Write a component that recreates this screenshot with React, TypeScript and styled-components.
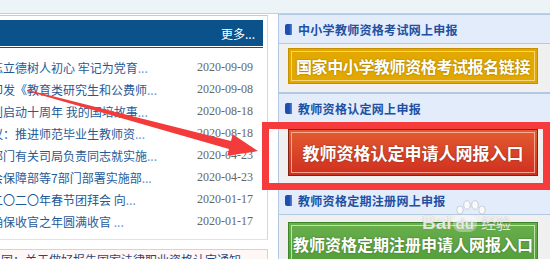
import styled, { createGlobalStyle } from 'styled-components'

const GlobalStyle = createGlobalStyle`
  html, body {
    margin: 0;
    padding: 0;
    background: #fff;
    overflow: hidden;
  }
  body {
    font-family: "Noto Sans CJK SC", "Liberation Sans", sans-serif;
  }
`

const news = [
  { title: '忘立德树人初心 牢记为党育', date: '2020-09-09', shift: 0 },
  { title: '印发《教育类研究生和公费师', date: '2020-09-08', shift: 0 },
  { title: '划启动十周年 我的国培故事', date: '2020-08-18', shift: 0 },
  { title: '议：推进师范毕业生教师资', date: '2020-08-18', shift: 0 },
  { title: '部门有关司局负责同志就实施', date: '2020-04-23', shift: 0 },
  { title: '会保障部等7部门部署实施部', date: '2020-04-23', shift: 0 },
  { title: '二〇二〇年春节团拜会 向', date: '2020-01-17', shift: 0 },
  { title: '确保收官之年圆满收官 ', date: '2020-01-17', shift: 0 },
]

export default function App() {
  return (
    <Page>
      <GlobalStyle />
      <TopStrip />
      <Main>
        <LeftCol>
          <NewsPanel>
            <NewsHeader>
              <More>更多...</More>
            </NewsHeader>
            <NewsList>
              {news.map(n => (
                <NewsRow key={n.title}>
                  <Title $shift={n.shift}>
                    {n.title}
                    <Dots>...</Dots>
                  </Title>
                  <DateText>{n.date}</DateText>
                </NewsRow>
              ))}
            </NewsList>
          </NewsPanel>
          <NoticeBox>国：关于做好报告国家法律职业资格认定通知</NoticeBox>
        </LeftCol>

        <RightCol>
          <Section>
            <SectionHead>
              <Mark />
              中小学教师资格考试网上申报
            </SectionHead>
            <SectionBody $top={4} $bottom={8}>
              <LinkButton $tone='gold' $height={36}>
                国家中小学教师资格考试报名链接
              </LinkButton>
            </SectionBody>
          </Section>
          <Section>
            <SectionHead>
              <Mark />
              教师资格认定网上申报
            </SectionHead>
            <SectionBody $top={6} $bottom={8}>
              <LinkButton $tone='red' $height={47}>
                教师资格认定申请人网报入口
              </LinkButton>
            </SectionBody>
          </Section>
          <Section>
            <SectionHead>
              <Mark />
              教师资格定期注册网上申报
            </SectionHead>
            <SectionBody $top={7} $bottom={8}>
              <LinkButton $tone='green' $height={44}>
                教师资格定期注册申请人网报入口
              </LinkButton>
            </SectionBody>
          </Section>
        </RightCol>
      </Main>

      <Highlight />

      <ArrowSvg viewBox='0 0 550 259' width='550' height='259'>
        <polygon
          fill='#f33b3b'
          points='27.2,89.7 231,141.1 232.7,134.3 258,151.1 227.3,155.7 229,148.9 26.8,91.1'
        />
      </ArrowSvg>

      <Watermark>
        <Paw viewBox='0 0 34 22' width='34' height='22'>
          <ellipse cx='6' cy='10' rx='3.2' ry='4' />
          <ellipse cx='13' cy='5' rx='3.2' ry='4.2' />
          <ellipse cx='21' cy='5' rx='3.2' ry='4.2' />
          <ellipse cx='28' cy='10' rx='3.2' ry='4' />
        </Paw>
        <WmLatin>Bai</WmLatin>
        <WmDu>du</WmDu>
        <WmCjk>经验</WmCjk>
      </Watermark>
    </Page>
  )
}

const Page = styled.div`
  position: relative;
  width: 550px;
  height: 259px;
  overflow: hidden;
  background: #fff;
`

const TopStrip = styled.div`
  height: 13px;
  background: #edf4f7;
  border-bottom: 1px solid #d4cdc7;
`

const Main = styled.div`
  display: flex;
  align-items: flex-start;
  gap: 10px;
`

const LeftCol = styled.div`
  flex-shrink: 0;
  width: 288px;
  margin-left: -20px;
`

const NewsPanel = styled.div`
  margin-top: 1px;
  border-top: 1px solid #b7cfe6;
  border-right: 1px solid #cbd8e5;
  border-bottom: 1px solid #e3e3e3;
  padding: 4px 4px 7px 0;
`

const NewsHeader = styled.div`
  height: 26px;
  padding-bottom: 1px;
  border-bottom: 1px solid #0b528a;
  background: #0b528a;
  background-clip: content-box;
  display: flex;
  align-items: center;
  justify-content: flex-end;
`

const More = styled.span`
  color: #fff;
  font-size: 12px;
  padding-right: 8px;
`

const NewsList = styled.div`
  padding-top: 8px;
`

const NewsRow = styled.div`
  height: 22px;
  display: flex;
  align-items: center;
  justify-content: space-between;
  padding: 0 10px 0 11px;
`

const Title = styled.span<{ $shift: number }>`
  margin-left: ${p => p.$shift}px;
  font-size: 12px;
  color: #1f5a98;
  white-space: nowrap;
`

const Dots = styled.span`
  color: #6a98cf;
`

const DateText = styled.span`
  font-family: "Liberation Serif", serif;
  font-size: 12px;
  color: #666;
`

const NoticeBox = styled.div`
  margin-top: 9px;
  height: 30px;
  border: 1px solid #f0c6c6;
  background: #fff6f6;
  padding: 1px 0 0 20px;
  font-size: 12px;
  color: #1f4a80;
  white-space: nowrap;
`

const RightCol = styled.div`
  flex-shrink: 0;
  width: 280px;
`

const Section = styled.div`
  border: 1px solid #b3c9e2;
  border-right: none;
`

const SectionHead = styled.div`
  height: 28px;
  background: #e3ecfb;
  border-bottom: 1px solid #b3c9e2;
  display: flex;
  align-items: center;
  gap: 6px;
  padding-left: 6px;
  font-size: 12px;
  letter-spacing: 0.3px;
  font-weight: 700;
  color: #2150a3;
`

const Mark = styled.i`
  width: 7px;
  height: 11px;
  border-radius: 2px 0 0 2px;
  background: linear-gradient(90deg, #1d4fb0 60%, #5b86d6);
`

const SectionBody = styled.div<{ $top: number; $bottom: number }>`
  background: #f0f0f0;
  padding: ${p => p.$top}px 0 ${p => p.$bottom}px 9px;
`

const tones = {
  gold: {
    bg: '#e2a800',
    border: '#c58f00',
    line: '#f5d67c',
    size: 16,
    spacing: -0.4,
  },
  red: {
    bg: 'linear-gradient(#e35c31, #cf2f1f)',
    border: '#7f2417',
    line: 'rgba(255, 190, 170, 0.8)',
    size: 17,
    spacing: 0,
  },
  green: {
    bg: 'linear-gradient(#69b04d, #529c3a)',
    border: '#3e8429',
    line: '#c0e3ad',
    size: 16,
    spacing: 0,
  },
}

const LinkButton = styled.div<{ $tone: keyof typeof tones; $height: number }>`
  box-sizing: border-box;
  width: 250px;
  height: ${p => p.$height}px;
  background: ${p => tones[p.$tone].bg};
  border: 1px solid ${p => tones[p.$tone].border};
  outline: 1px solid ${p => tones[p.$tone].line};
  outline-offset: -4px;
  display: flex;
  align-items: center;
  justify-content: center;
  color: #fff;
  font-size: ${p => tones[p.$tone].size}px;
  letter-spacing: ${p => tones[p.$tone].spacing}px;
  font-weight: 700;
  white-space: nowrap;
  text-shadow: 0 0 2px rgba(0, 0, 0, 0.35);
`

const Highlight = styled.div`
  position: absolute;
  left: 262px;
  top: 122px;
  width: 288px;
  height: 68px;
  box-sizing: border-box;
  border: 7px solid #f53b3b;
`

const ArrowSvg = styled.svg`
  position: absolute;
  left: 0;
  top: 0;
  pointer-events: none;
`

const Watermark = styled.div`
  position: absolute;
  left: 422px;
  top: 212px;
  display: flex;
  align-items: baseline;
  color: rgba(255, 255, 255, 0.8);
  text-shadow: 0 0 1px rgba(120, 120, 120, 0.6);
  pointer-events: none;
`

const Paw = styled.svg`
  position: absolute;
  left: 32px;
  top: -12px;
  fill: rgba(255, 255, 255, 0.75);
  stroke: rgba(140, 140, 140, 0.45);
  stroke-width: 0.8;
`

const WmLatin = styled.span`
  font-family: "Liberation Sans", sans-serif;
  font-weight: 700;
  font-size: 19px;
`

const WmDu = styled.span`
  font-family: "Liberation Sans", sans-serif;
  font-weight: 700;
  font-size: 15px;
  margin-left: 1px;
  padding: 0 3px;
  border-radius: 8px;
  background: rgba(255, 255, 255, 0.35);
`

const WmCjk = styled.span`
  font-size: 15px;
  margin-left: 4px;
`
